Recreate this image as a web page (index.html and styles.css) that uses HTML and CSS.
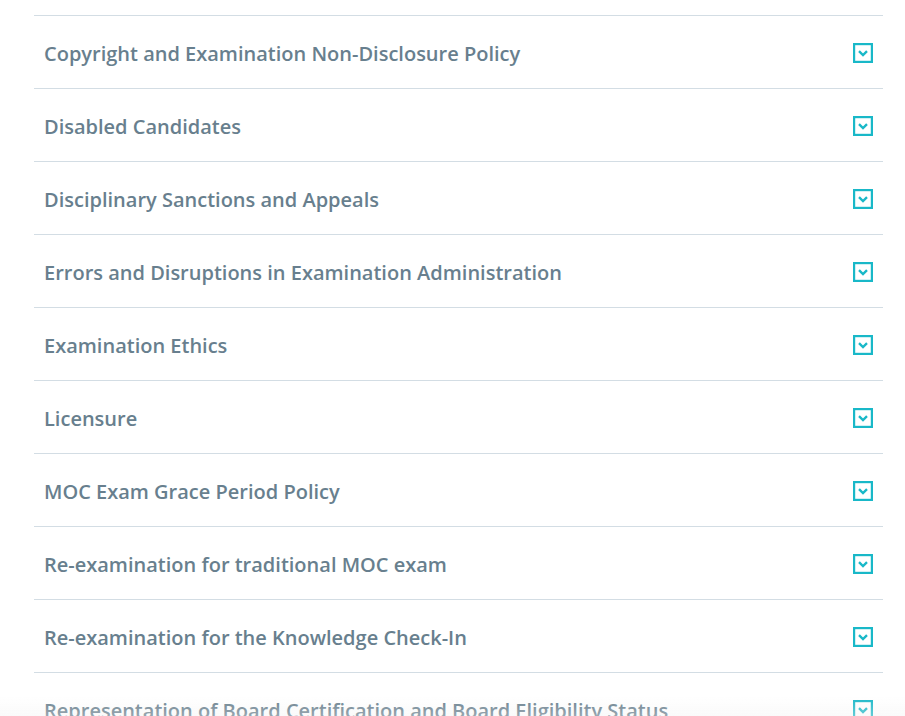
FILE: index.html
```html
<!DOCTYPE html>
<html lang="en">
<head>
<meta charset="utf-8">
<title>Policies</title>
<link rel="stylesheet" href="styles.css">
</head>
<body>
<div class="list">
  <div class="item"><span class="title">Copyright and Examination Non-Disclosure Policy</span><span class="toggle"><svg viewBox="0 0 20 20" width="20" height="20"><rect x="1.1" y="1.1" width="17.8" height="17.8" fill="none" stroke="#19b8c8" stroke-width="2.2"/><path d="M6 8.2 L10 12 L14 8.2" fill="none" stroke="#19b8c8" stroke-width="2.4"/></svg></span></div>
  <div class="item"><span class="title">Disabled Candidates</span><span class="toggle"><svg viewBox="0 0 20 20" width="20" height="20"><rect x="1.1" y="1.1" width="17.8" height="17.8" fill="none" stroke="#19b8c8" stroke-width="2.2"/><path d="M6 8.2 L10 12 L14 8.2" fill="none" stroke="#19b8c8" stroke-width="2.4"/></svg></span></div>
  <div class="item"><span class="title">Disciplinary Sanctions and Appeals</span><span class="toggle"><svg viewBox="0 0 20 20" width="20" height="20"><rect x="1.1" y="1.1" width="17.8" height="17.8" fill="none" stroke="#19b8c8" stroke-width="2.2"/><path d="M6 8.2 L10 12 L14 8.2" fill="none" stroke="#19b8c8" stroke-width="2.4"/></svg></span></div>
  <div class="item"><span class="title">Errors and Disruptions in Examination Administration</span><span class="toggle"><svg viewBox="0 0 20 20" width="20" height="20"><rect x="1.1" y="1.1" width="17.8" height="17.8" fill="none" stroke="#19b8c8" stroke-width="2.2"/><path d="M6 8.2 L10 12 L14 8.2" fill="none" stroke="#19b8c8" stroke-width="2.4"/></svg></span></div>
  <div class="item"><span class="title">Examination Ethics</span><span class="toggle"><svg viewBox="0 0 20 20" width="20" height="20"><rect x="1.1" y="1.1" width="17.8" height="17.8" fill="none" stroke="#19b8c8" stroke-width="2.2"/><path d="M6 8.2 L10 12 L14 8.2" fill="none" stroke="#19b8c8" stroke-width="2.4"/></svg></span></div>
  <div class="item"><span class="title">Licensure</span><span class="toggle"><svg viewBox="0 0 20 20" width="20" height="20"><rect x="1.1" y="1.1" width="17.8" height="17.8" fill="none" stroke="#19b8c8" stroke-width="2.2"/><path d="M6 8.2 L10 12 L14 8.2" fill="none" stroke="#19b8c8" stroke-width="2.4"/></svg></span></div>
  <div class="item"><span class="title">MOC Exam Grace Period Policy</span><span class="toggle"><svg viewBox="0 0 20 20" width="20" height="20"><rect x="1.1" y="1.1" width="17.8" height="17.8" fill="none" stroke="#19b8c8" stroke-width="2.2"/><path d="M6 8.2 L10 12 L14 8.2" fill="none" stroke="#19b8c8" stroke-width="2.4"/></svg></span></div>
  <div class="item"><span class="title">Re-examination for traditional MOC exam</span><span class="toggle"><svg viewBox="0 0 20 20" width="20" height="20"><rect x="1.1" y="1.1" width="17.8" height="17.8" fill="none" stroke="#19b8c8" stroke-width="2.2"/><path d="M6 8.2 L10 12 L14 8.2" fill="none" stroke="#19b8c8" stroke-width="2.4"/></svg></span></div>
  <div class="item"><span class="title">Re-examination for the Knowledge Check-In</span><span class="toggle"><svg viewBox="0 0 20 20" width="20" height="20"><rect x="1.1" y="1.1" width="17.8" height="17.8" fill="none" stroke="#19b8c8" stroke-width="2.2"/><path d="M6 8.2 L10 12 L14 8.2" fill="none" stroke="#19b8c8" stroke-width="2.4"/></svg></span></div>
  <div class="item"><span class="title">Representation of Board Certification and Board Eligibility Status</span><span class="toggle"><svg viewBox="0 0 20 20" width="20" height="20"><rect x="1.1" y="1.1" width="17.8" height="17.8" fill="none" stroke="#19b8c8" stroke-width="2.2"/><path d="M6 8.2 L10 12 L14 8.2" fill="none" stroke="#19b8c8" stroke-width="2.4"/></svg></span></div>
</div>
<div class="fade"></div>
</body>
</html>
```

FILE: styles.css
```css
html, body {
  margin: 0;
  padding: 0;
  background: #ffffff;
  overflow: hidden;
  height: 716px;
}
.list {
  padding: 15px 22px 0 34px;
}
.item {
  border-top: 1px solid #d3dde4;
  height: 72px;
  display: flex;
  align-items: center;
  justify-content: space-between;
  padding: 0 10px;
}
.title {
  font-family: "Open Sans", sans-serif;
  font-weight: 600;
  font-size: 20px;
  color: #687f8e;
  padding-top: 3px;
}
.toggle {
  display: flex;
  width: 20px;
  height: 20px;
  margin-top: 2px;
}
.fade {
  position: fixed;
  left: 0;
  right: 0;
  bottom: 0;
  height: 20px;
  background: linear-gradient(to bottom, rgba(245,245,245,0), rgba(240,240,240,0.35));
  pointer-events: none;
}
```
